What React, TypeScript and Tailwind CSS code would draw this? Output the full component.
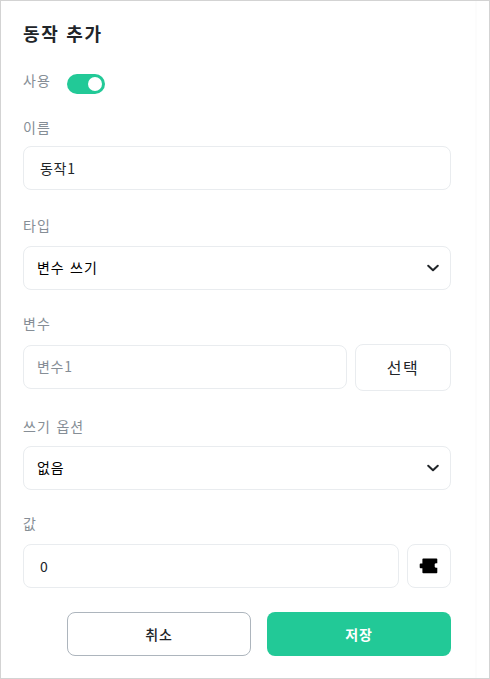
import React from 'react';

function Label({ children }: { children: React.ReactNode }) {
  return <div className="h-5 text-[14px] leading-5 tracking-[1px] whitespace-nowrap text-[#868e96] [word-spacing:1.5px]">{children}</div>;
}

function Chevron() {
  return (
    <svg width="14" height="14" viewBox="0 0 14 14" fill="none" stroke="#212529" strokeWidth="2" strokeLinecap="round" strokeLinejoin="round">
      <path d="M2.2 4.7 7 9.3l4.8-4.6" />
    </svg>
  );
}

function Select({ value }: { value: string }) {
  return (
    <button className="flex h-11 w-full items-center justify-between rounded-lg border border-[#e9ecef] pr-[10px] pl-[13px] text-[14px] tracking-[0.9px] text-black [word-spacing:1.5px]">
      <span className="pb-[2px]">{value}</span>
      <Chevron />
    </button>
  );
}

function PuzzleIcon() {
  return (
    <svg width="20" height="18" viewBox="0 0 20 18" fill="#000">
      <path d="M4.3 1.5h13.2q.8 0 .8.8V6.2h-1q-1.6.1-1.6.9v2.7q0 .9 1.6.9h1v4.7q0 .8-.8.8H4.3q-.9 0-.9-.8V11.2H1.6q-.9 0-.9-.9V7.4q0-.9.9-.9h1.8V2.3q0-.8.9-.8Z" />
    </svg>
  );
}

export default function App() {
  return (
    <div className="flex h-[679px] w-[490px] border border-[#d3d3d3] bg-white font-['Noto_Sans_CJK_KR',sans-serif]">
      <main className="w-[476px] border-r-2 border-[#fcfcfc] pt-[20px] pr-[24px] pl-[22px]">
        <h1 className="h-6 text-[18px] leading-6 font-bold tracking-[1.7px] text-[#212529] [word-spacing:1px]">동작 추가</h1>

        <div className="mt-[25px] flex h-[24px] gap-4">
          <div className="w-7"><Label>사용</Label></div>
          <div className="mt-1 flex h-5 w-[38px] items-center justify-end rounded-full bg-[#22c997] pr-[3px]">
            <span className="size-[14px] rounded-full bg-white" />
          </div>
        </div>

        <div className="mt-[23px]">
          <Label>이름</Label>
          <div className="mt-[9px] flex h-11 items-center rounded-lg border border-[#e9ecef] px-4 text-[14px] tracking-[0.7px] text-[#212529]">동작1</div>
        </div>

        <div className="mt-[25px]">
          <Label>타입</Label>
          <div className="mt-[11px]"><Select value="변수 쓰기" /></div>
        </div>

        <div className="mt-[23px]">
          <Label>변수</Label>
          <div className="mt-[11px] flex h-[47px] gap-2">
            <div className="mt-[1px] flex h-11 flex-1 items-center rounded-lg border border-[#e9ecef] px-[13px] pb-[2px] text-[14px] tracking-[0.7px] text-[#868e96]">변수1</div>
            <button className="h-[47px] w-24 rounded-lg border border-[#e9ecef] pb-[2px] text-[16px] tracking-[1.6px] text-[#212529]">선택</button>
          </div>
        </div>

        <div className="mt-[25px]">
          <Label>쓰기 옵션</Label>
          <div className="mt-[10px]"><Select value="없음" /></div>
        </div>

        <div className="mt-[23px]">
          <Label>값</Label>
          <div className="mt-[11px] flex gap-2">
            <div className="flex h-11 flex-1 items-center rounded-lg border border-[#e9ecef] px-4 text-[14px] text-[#212529]">0</div>
            <button className="flex size-11 items-center justify-center rounded-lg border border-[#e9ecef]"><PuzzleIcon /></button>
          </div>
        </div>

        <div className="mt-6 flex justify-end gap-4 text-[14px] tracking-[0.9px]">
          <button className="h-11 w-[184px] rounded-lg border border-[#adb5bd] font-medium text-[#212529]">취소</button>
          <button className="h-11 w-[184px] rounded-lg bg-[#22c997] font-bold text-white">저장</button>
        </div>
      </main>
    </div>
  );
}
